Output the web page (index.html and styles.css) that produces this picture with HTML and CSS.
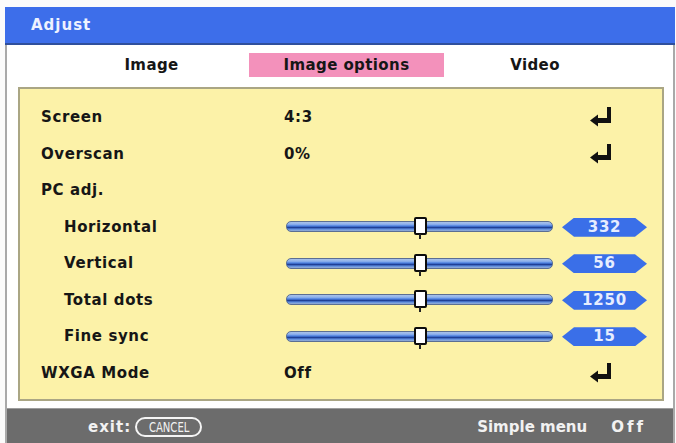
FILE: index.html
```html
<!DOCTYPE html>
<html lang="en">
<head>
<meta charset="utf-8">
<title>Adjust</title>
<link rel="stylesheet" href="styles.css">
</head>
<body>
<div class="frame">
  <div class="titlebar">Adjust</div>
  <div class="content">
    <div class="tabs">
      <div class="tab">Image</div>
      <div class="tab active">Image options</div>
      <div class="tab">Video</div>
    </div>
    <div class="panel">
      <div class="row">
        <div class="label">Screen</div>
        <div class="value">4:3</div>
        <svg class="enter" viewBox="0 0 22 20"><rect x="17" y="0" width="4" height="16"/><rect x="7" y="11" width="14" height="5"/><polygon points="0,13.5 8,7.5 8,19.5"/></svg>
      </div>
      <div class="row">
        <div class="label">Overscan</div>
        <div class="value">0%</div>
        <svg class="enter" viewBox="0 0 22 20"><rect x="17" y="0" width="4" height="16"/><rect x="7" y="11" width="14" height="5"/><polygon points="0,13.5 8,7.5 8,19.5"/></svg>
      </div>
      <div class="row">
        <div class="label">PC adj.</div>
      </div>
      <div class="row">
        <div class="label sub">Horizontal</div>
        <div class="track"><div class="thumb" style="left:50%"></div></div>
        <div class="badge">332</div>
      </div>
      <div class="row">
        <div class="label sub">Vertical</div>
        <div class="track"><div class="thumb" style="left:50%"></div></div>
        <div class="badge">56</div>
      </div>
      <div class="row">
        <div class="label sub">Total dots</div>
        <div class="track"><div class="thumb" style="left:50%"></div></div>
        <div class="badge">1250</div>
      </div>
      <div class="row">
        <div class="label sub">Fine sync</div>
        <div class="track"><div class="thumb" style="left:50%"></div></div>
        <div class="badge">15</div>
      </div>
      <div class="row">
        <div class="label">WXGA Mode</div>
        <div class="value">Off</div>
        <svg class="enter" viewBox="0 0 22 20"><rect x="17" y="0" width="4" height="16"/><rect x="7" y="11" width="14" height="5"/><polygon points="0,13.5 8,7.5 8,19.5"/></svg>
      </div>
    </div>
    <div class="footer">
      <div class="exit">exit:</div>
      <div class="cancel"><span>CANCEL</span></div>
      <div class="spacer"></div>
      <div class="simple">Simple menu</div>
      <div class="off">Off</div>
    </div>
  </div>
</div>
</body>
</html>
```
FILE: styles.css
```css
html, body {
  margin: 0;
  padding: 0;
  background: #fbfbfb;
  overflow: hidden;
}
body {
  font-family: "DejaVu Sans", "Liberation Sans", sans-serif;
  font-weight: bold;
  color: #161616;
}
.frame {
  margin: 7px 0 0 5px;
  width: 670px;
  height: 436px;
  display: flex;
  flex-direction: column;
}
.titlebar {
  height: 36px;
  background: #3d6eea;
  border-bottom: 2px solid #2f4f9c;
  color: #eef2ff;
  font-size: 15px;
  letter-spacing: 1px;
  line-height: 36px;
  padding-left: 26px;
  flex: none;
}
.content {
  flex: 1;
  background: #ffffff;
  border-left: 2px solid #a9a9a9;
  border-right: 2px solid #a9a9a9;
  display: flex;
  flex-direction: column;
}
.tabs {
  height: 42px;
  display: grid;
  grid-template-columns: 195px 195px 182px;
  padding-left: 47px;
  align-items: center;
  flex: none;
}
.tab {
  height: 24px;
  line-height: 24px;
  text-align: center;
  font-size: 15px;
  letter-spacing: 0.4px;
  margin-top: -2px;
}
.tab.active {
  background: #f391bb;
}
.panel {
  margin: 0 9px 0 11px;
  height: 300px;
  background: #fcf2a8;
  border: 2px solid #aaa684;
  padding: 10px 0 0 0;
  box-sizing: content-box;
  flex: none;
}
.row {
  height: 36.5px;
  display: flex;
  align-items: center;
  font-size: 15px;
  letter-spacing: 0.6px;
}
.label {
  box-sizing: border-box;
  width: 264px;
  padding-left: 21px;
  flex: none;
}
.label.sub {
  padding-left: 44px;
}
.value {
  flex: 1;
}
.enter {
  width: 22px;
  height: 20px;
  fill: #111111;
  margin-right: 50px;
  flex: none;
}
.track {
  position: relative;
  margin-left: 2px;
  width: 265px;
  height: 9px;
  border: 1px solid #5b6f93;
  border-radius: 5px;
  background: linear-gradient(to bottom, #a9c2e8 0, #8fb2ec 25%, #4a7fe0 45%, #1d3c92 62%, #5a8be0 78%, #98aed2 100%);
  flex: none;
}
.thumb {
  position: absolute;
  top: -5px;
  width: 9px;
  height: 14px;
  margin-left: -6px;
  background: #ffffff;
  border: 2px solid #0c0c0c;
  border-radius: 2px;
}
.thumb::after {
  content: "";
  position: absolute;
  left: 3px;
  top: 15px;
  width: 2px;
  height: 5px;
  background: #222;
}
.badge {
  margin-left: 9px;
  width: 85px;
  height: 19px;
  line-height: 19px;
  background: #3a6fe8;
  color: #e6edff;
  text-align: center;
  font-size: 15px;
  letter-spacing: 0.8px;
  clip-path: polygon(0 50%, 12px 0, calc(100% - 12px) 0, 100% 50%, calc(100% - 12px) 100%, 12px 100%);
  margin-top: 1px;
  flex: none;
}
.footer {
  margin-top: 7px;
  flex: 1;
  background: #6c6c6c;
  border-top: 1px solid #9c9c9c;
  display: flex;
  align-items: center;
  padding: 2px 0 0 81px;
  color: #f2f2f2;
  font-size: 15px;
}
.exit {
  letter-spacing: 1px;
}
.cancel {
  margin-left: 4px;
  width: 63px;
  height: 16px;
  border: 2px solid #f4f4f4;
  border-radius: 10px;
  display: flex;
  align-items: center;
  justify-content: center;
  overflow: hidden;
}
.cancel span {
  font-weight: normal;
  font-size: 14px;
  display: inline-block;
  transform: scaleX(0.72);
  letter-spacing: 0;
}
.spacer {
  flex: 1;
}
.simple {
  letter-spacing: 0;
}
.off {
  margin-left: 24px;
  margin-right: 27px;
  letter-spacing: 3px;
}
```
